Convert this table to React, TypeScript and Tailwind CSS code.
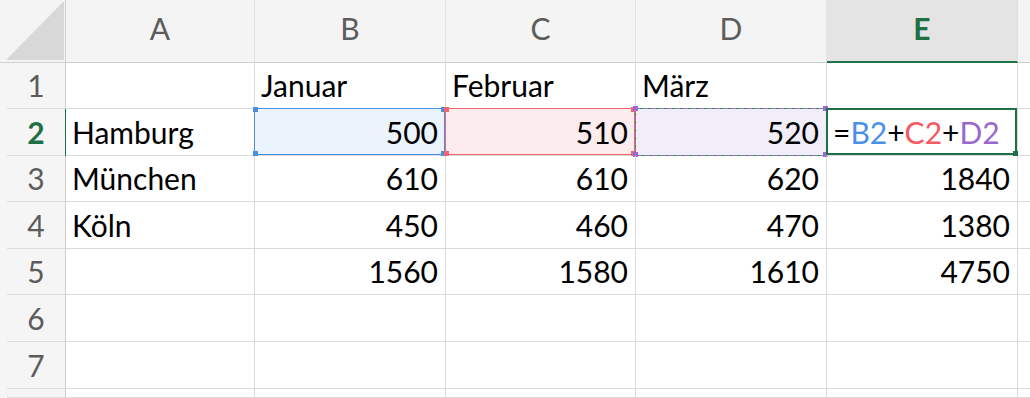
import React from "react";

const LETTERS = ["A", "B", "C", "D", "E"];

type Value = string | number | null;

const DATA: Value[][] = [
  [null, "Januar", "Februar", "März", null],
  ["Hamburg", 500, 510, 520, null],
  ["München", 610, 610, 620, 1840],
  ["Köln", 450, 460, 470, 1380],
  [null, 1560, 1580, 1610, 4750],
  [null, null, null, null, null],
  [null, null, null, null, null],
  [null, null, null, null, null],
];

const font = "font-['Lato','Noto_Sans',sans-serif] text-[30px] leading-none";

function Handle({ pos, color }: { pos: string; color: string }) {
  return <span className={`absolute h-[5px] w-[5px] ${pos} ${color}`} />;
}

function Corners({ color }: { color: string }) {
  return (
    <>
      <Handle pos="-left-[2px] -top-[2px]" color={color} />
      <Handle pos="-right-[2px] -top-[2px]" color={color} />
      <Handle pos="-left-[2px] -bottom-[2px]" color={color} />
      <Handle pos="-right-[2px] -bottom-[2px]" color={color} />
    </>
  );
}

// Range highlights for the cells referenced by the formula in E2
function RangeBox({ col }: { col: number }) {
  if (col === 1)
    return (
      <div className="absolute -left-px -top-px bottom-0 right-0 border border-[#4a8fe6] bg-[#ebf3fd]">
        <Corners color="bg-[#4a8fe6]" />
      </div>
    );
  if (col === 2)
    return (
      <div className="absolute -left-px -top-px bottom-0 right-0 border border-[#f4646b] bg-[#fdeced]">
        <Corners color="bg-[#f4646b]" />
      </div>
    );
  if (col === 3)
    return (
      <div className="absolute -left-px -top-px bottom-0 right-0 bg-[#f1eef9]">
        <svg className="absolute inset-0" width="192" height="48">
          <rect x="0.5" y="0.5" width="191" height="47" fill="none" stroke="#9b6bd1" strokeDasharray="4 4" />
          <rect x="0.5" y="0.5" width="191" height="47" fill="none" stroke="#2f8a52" strokeDasharray="4 4" strokeDashoffset="4" />
        </svg>
        <Corners color="bg-[#9b6bd1]" />
      </div>
    );
  return (
    <div className="absolute -left-px -top-px bottom-0 right-0 border-2 border-[#1f7145]">
      <span className="absolute -bottom-[3px] -right-[3px] h-[5px] w-[5px] bg-[#1f7145]" />
    </div>
  );
}

function Formula() {
  return (
    <span>
      =<span className="text-[#4a8fe8]">B2</span>+<span className="text-[#f55a62]">C2</span>+
      <span className="text-[#9a68cc]">D2</span>
    </span>
  );
}

export default function App() {
  return (
    <div className="h-[398px] w-[1030px] overflow-hidden bg-white">
      <div className="grid h-full grid-cols-[66px_189px_191px_190px_191px_191px_1fr] grid-rows-[63px_46px_47px_46px_47px_46px_47px_47px_1fr]">
        {/* corner */}
        <div className="flex items-end justify-end border-r border-b border-[#cfcfcf] bg-[#f4f4f4] pr-px pb-[2px]">
          <svg width="58" height="59" viewBox="0 0 58 59">
            <polygon points="58,0 58,59 0,59" fill="#d8d8d8" />
          </svg>
        </div>

        {/* column headers */}
        {LETTERS.map((l) =>
          l === "E" ? (
            <div
              key={l}
              className={`flex items-end justify-center border-r border-b-2 border-r-[#e0e0e0] border-b-[#1f7145] bg-[#e4e4e4] pb-[18px] font-bold text-[#1f7145] ${font}`}
            >
              {l}
            </div>
          ) : (
            <div
              key={l}
              className={`flex items-end justify-center border-r border-b border-r-[#e2e2e2] border-b-[#cfcfcf] bg-[#f4f4f4] pb-[19px] text-[#5c5c5c] ${font}`}
            >
              {l}
            </div>
          )
        )}
        <div className="border-b border-[#cfcfcf] bg-[#f4f4f4]" />

        {DATA.map((row, r) => (
          <React.Fragment key={r}>
            <div
              className={`bg-[#f5f5f5] pl-[7px] border-r ${r === 1 ? "border-[#1f7145]" : "border-[#cfcfcf]"}`}
            >
              <div
                className={`flex h-full items-end justify-center border-b border-[#dedede] pb-[8px] ${font} ${
                  r === 1 ? "font-bold text-[#1f7145]" : "text-[#5c5c5c]"
                }`}
              >
                {/* the last row is only a sliver, its number sits below the edge */}
                {r < 7 ? r + 1 : null}
              </div>
            </div>

            {row.map((v, c) => {
              const numeric = typeof v === "number";
              return (
                <div
                  key={c}
                  className={`relative flex items-end border-r border-b border-[#dadada] pb-[8px] text-black ${font} ${
                    numeric ? "justify-end pr-[7px]" : "pl-[6px]"
                  }`}
                >
                  {r === 1 && c > 0 && <RangeBox col={c} />}
                  <span className="relative whitespace-nowrap">
                    {r === 1 && c === 4 ? <Formula /> : v}
                  </span>
                </div>
              );
            })}
            <div className="border-b border-[#dadada]" />
          </React.Fragment>
        ))}
      </div>
    </div>
  );
}
